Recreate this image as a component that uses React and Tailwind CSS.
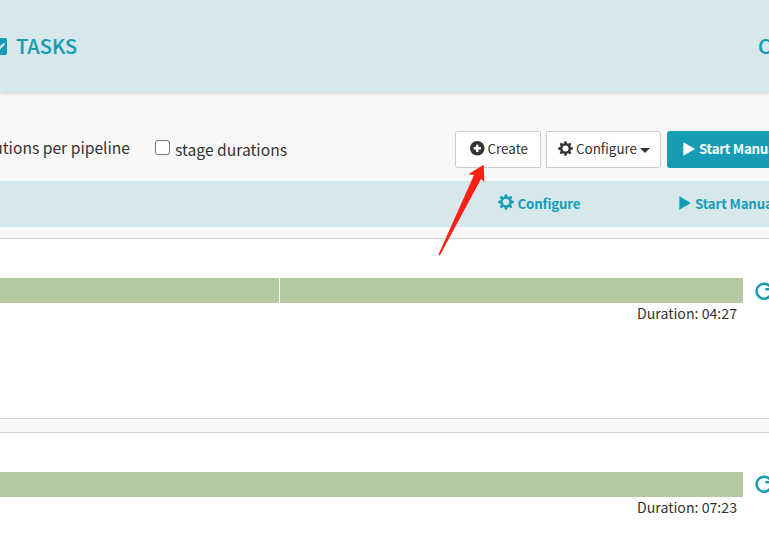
const FONT = "font-['Noto_Sans_CJK_SC','Source_Sans_Pro',sans-serif]";

const TEETH = [0, 45, 90, 135, 180, 225, 270, 315];

function Gear({ className }) {
  return (
    <svg viewBox="0 0 16 16" className={className} fill="currentColor">
      <circle cx="8" cy="8" r="4.5" fill="none" stroke="currentColor" strokeWidth="2.5" />
      {TEETH.map((a) => (
        <path key={a} d="M6.2 3 L7 0.2 H9 L9.8 3 Z" transform={`rotate(${a} 8 8)`} />
      ))}
    </svg>
  );
}

function PlusCircle({ className }) {
  return (
    <svg viewBox="0 0 14 14" className={className}>
      <circle cx="7" cy="7" r="7" fill="currentColor" />
      <path d="M7 3.5V10.5M3.5 7H10.5" stroke="#fff" strokeWidth="2.3" />
    </svg>
  );
}

function Play({ className }) {
  return (
    <svg viewBox="0 0 12 14" className={className} fill="currentColor">
      <path d="M0.3 0.3 L12 7 L0.3 13.7 Z" />
    </svg>
  );
}

function CheckSquare({ className }) {
  return (
    <svg viewBox="0 0 17 17" className={className}>
      <rect width="17" height="17" rx="2" fill="currentColor" />
      <path d="M4 8.5 L8 12 L14.3 5.4" fill="none" stroke="#d7e8ec" strokeWidth="2.2" />
    </svg>
  );
}

function Rerun({ className }) {
  return (
    <svg viewBox="0 0 18 18" className={className} fill="none" stroke="currentColor" strokeWidth="2.5">
      <path d="M15.2 4.8 A7.5 7.5 0 1 0 15.8 12.5" />
      <path d="M10.3 7.2 H17" />
    </svg>
  );
}

function Stage({ duration, split }) {
  return (
    <div className="w-full shrink-0">
      <div className="flex h-[25px]">
        {split ? (
          <div className="flex w-[743px] shrink-0 gap-px">
            <div className="w-[279px] bg-[#b2ca9d]" />
            <div className="flex-1 bg-[#b2ca9d]" />
          </div>
        ) : (
          <div className="w-[743px] shrink-0 bg-[#b2ca9d]" />
        )}
        <Rerun className={`ml-[11.5px] h-[18px] w-[18px] shrink-0 text-[#169db5] ${split ? "mt-1" : "mt-[3px]"}`} />
      </div>
      <div className="w-[737px] text-right text-[14.15px] leading-5">{duration}</div>
    </div>
  );
}

export default function App() {
  return (
    <div className={`relative flex h-[548px] w-[769px] flex-col overflow-hidden whitespace-nowrap bg-[#f8f8f8] text-[#333] ${FONT}`}>
      <header className="z-10 flex h-[92px] shrink-0 items-center bg-[#d7e8ec] text-[20px] font-medium text-[#169db5] shadow-[0_1px_4px_rgba(0,0,0,0.2)]">
        <CheckSquare className="-ml-[10px] h-[17px] w-[17px] shrink-0" />
        <span className="ml-[9px] leading-6 [-webkit-text-stroke:0.15px]">TASKS</span>
        <span className="ml-auto w-[11px] leading-6 [-webkit-text-stroke:0.15px]">C</span>
      </header>

      <div className="flex h-[89px] shrink-0 items-start pt-[39px]">
        <div className="mt-[5px] flex w-[130px] justify-end text-[15.65px] leading-6">utions per pipeline</div>
        <label className="ml-[25px] flex shrink-0 items-start">
          <span className="mt-[9px] h-[15px] w-[15px] rounded-[3px] border border-[#767676] bg-white" />
          <span className="ml-[5px] mt-[7px] text-[15.65px] leading-6">stage durations</span>
        </label>
        <div className="ml-auto flex w-[314px] shrink-0 text-[13.4px] leading-5">
          <button className="flex h-[37px] w-[86px] shrink-0 items-center rounded-l-[3px] border border-[#ccc] bg-white pl-[14px]">
            <PlusCircle className="-mt-0.5 h-[14.5px] w-[14.5px] shrink-0" />
            <span className="-mt-[3px] ml-[3px]">Create</span>
          </button>
          <button className="ml-[5px] flex h-[37px] w-[115px] shrink-0 items-center rounded-r-[3px] border border-[#ccc] bg-white pl-[11px]">
            <Gear className="-mt-0.5 h-[15px] w-[15px] shrink-0" />
            <span className="-mt-[3px] ml-[3px]">Configure</span>
            <span className="ml-[3px] mt-[2px] border-x-[5px] border-t-[5px] border-x-transparent border-t-[#333]" />
          </button>
          <button className="ml-[6px] flex h-[37px] w-[102px] shrink-0 items-center overflow-hidden rounded-l-[3px] bg-[#169db5] pl-4 font-bold text-white">
            <Play className="-mt-px h-[14px] w-3 shrink-0" />
            <span className="-mt-px ml-1 text-[13.3px] tracking-[-0.02em]">Start Manua</span>
          </button>
        </div>
      </div>

      <div className="flex h-[46px] shrink-0 items-center bg-[#d7e8ec] pl-[498px] text-[13.3px] font-bold leading-5 text-[#169db5]">
        <Gear className="-mt-[4px] h-4 w-4 shrink-0" />
        <span className="ml-[3.5px] w-[62.5px] shrink-0 tracking-[-0.012em]">Configure</span>
        <Play className="-mt-[2px] ml-[99px] h-[14px] w-3 shrink-0" />
        <span className="ml-1 tracking-[-0.012em]">Start Manua</span>
      </div>

      <section className="mt-[11px] flex h-[181px] shrink-0 flex-col overflow-hidden border-y border-[#d2d2d2] bg-white pt-[39px]">
        <Stage duration="Duration: 04:27" split />
      </section>
      <section className="mt-[13px] flex h-[180px] shrink-0 flex-col overflow-hidden border-y border-[#d2d2d2] bg-white pt-[39px]">
        <Stage duration="Duration: 07:23" />
      </section>

      <svg viewBox="0 0 48 92" className="absolute left-[438px] top-[164px] z-20 h-[92px] w-12">
        <path d="M45.7 0.8 L30.2 10.2 L36 11 L0.5 90.5 L1.8 91.6 L43 15 L46.4 18 Z" fill="#ff2015" />
      </svg>
    </div>
  );
}
